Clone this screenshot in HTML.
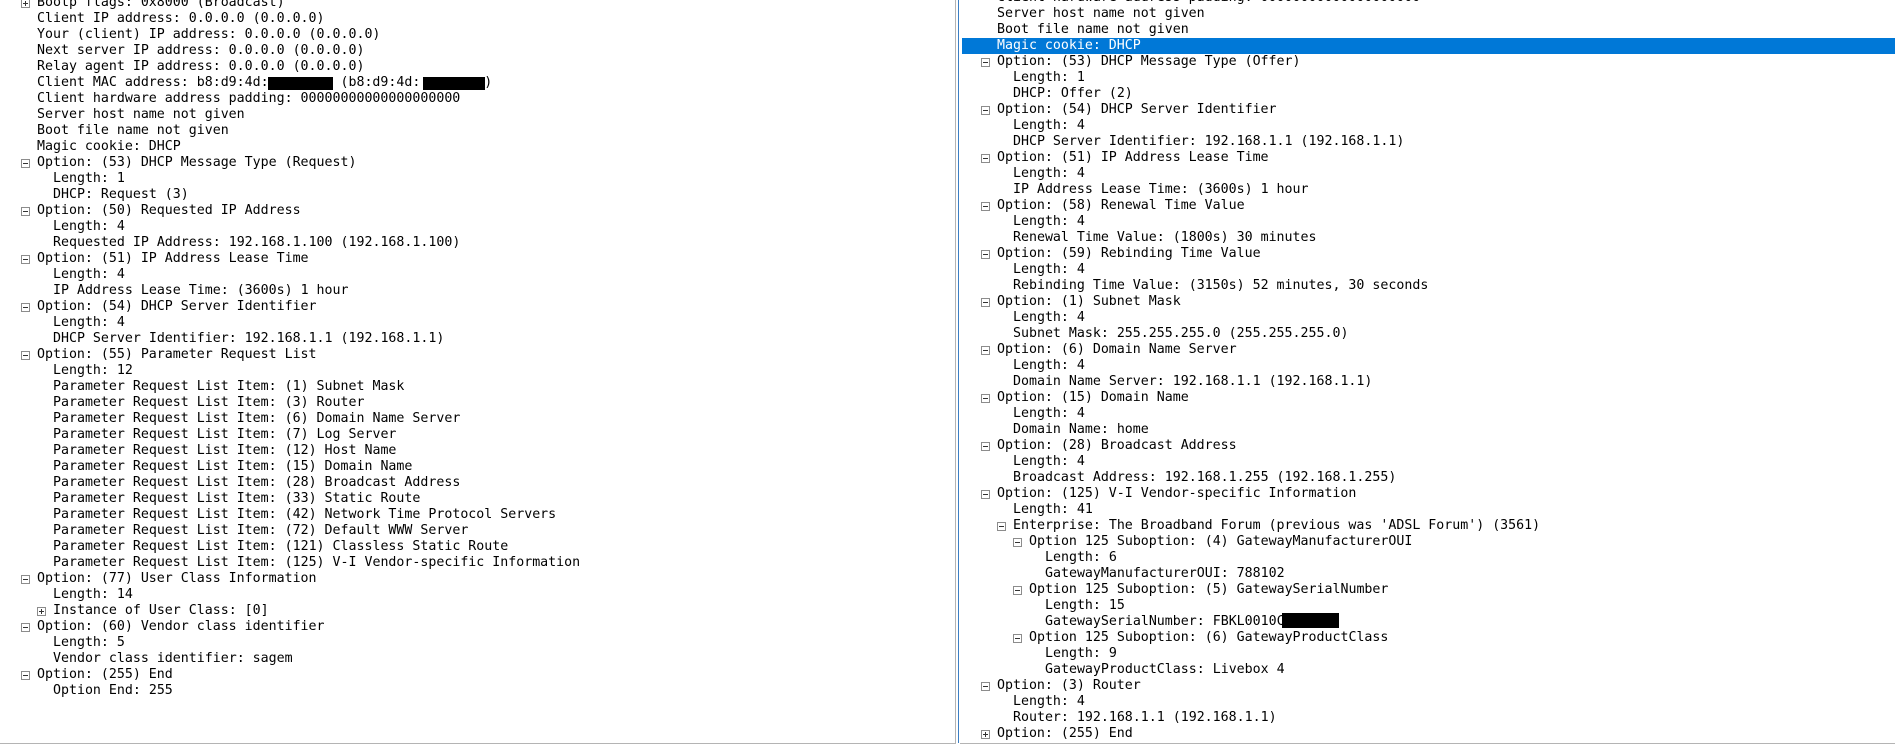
<!DOCTYPE html>
<html><head><meta charset="utf-8"><style>
html,body{margin:0;padding:0;background:#fff;width:1895px;height:745px;overflow:hidden;position:relative}
.p{position:absolute;top:0;overflow:hidden;background:#fff}
.l{position:absolute;height:16px;line-height:16px;white-space:pre;font-family:"DejaVu Sans Mono","Liberation Mono",monospace;font-size:13.28px;color:#000;left:0;right:0}
.t{position:absolute;top:0}
.i{position:absolute;top:4px;width:7px;height:7px;border:1px solid #8c8c8c;background:#fff}
.i:before{content:"";position:absolute;left:1px;top:3px;width:5px;height:1px;background:#333}
.i.pl:after{content:"";position:absolute;left:3px;top:1px;width:1px;height:5px;background:#333}
.b{position:absolute;background:#000}
.sel{background:#0078d7}
.sel .t{color:#fff}
</style></head><body>
<div class="p" id="L" style="left:0;width:955px;height:743px;border-right:1px solid #b4b4b4;border-bottom:1px solid #b4b4b4"></div>
<div style="position:absolute;left:958px;top:0;width:1px;height:743px;background:#3c7fc4"></div>
<div class="p" id="R" style="left:960px;width:935px;height:743px;border-bottom:1px solid #b4b4b4"></div>
<script>
function build(id,top0,lines){
 var p=document.getElementById(id);var h='';
 lines.forEach(function(a,n){
  var lv=a[0],ic=a[1],tx=a[2],sel=a[3];
  var x=37+lv*16;
  var top=top0+n*16;
  h+='<div class="l'+(sel?' sel':'')+'" style="top:'+top+'px;'+(sel?'left:2px;':'')+'">';
  if(ic) h+='<span class="i'+(ic=='+'?' pl':'')+'" style="left:'+(x-16-(sel?2:0))+'px"></span>';
  h+='<span class="t" style="left:'+(x-(sel?2:0))+'px">'+tx.replace(/&/g,'&amp;').replace(/</g,'&lt;')+'</span></div>';
 });
 p.innerHTML=h;
}
var P='Parameter Request List Item: ';
build('L',-5,[
[0,'+','Bootp flags: 0x8000 (Broadcast)'],
[0,0,'Client IP address: 0.0.0.0 (0.0.0.0)'],
[0,0,'Your (client) IP address: 0.0.0.0 (0.0.0.0)'],
[0,0,'Next server IP address: 0.0.0.0 (0.0.0.0)'],
[0,0,'Relay agent IP address: 0.0.0.0 (0.0.0.0)'],
[0,0,'Client MAC address: b8:d9:4d:         (b8:d9:4d:        )'],
[0,0,'Client hardware address padding: 00000000000000000000'],
[0,0,'Server host name not given'],
[0,0,'Boot file name not given'],
[0,0,'Magic cookie: DHCP'],
[0,'-','Option: (53) DHCP Message Type (Request)'],
[1,0,'Length: 1'],
[1,0,'DHCP: Request (3)'],
[0,'-','Option: (50) Requested IP Address'],
[1,0,'Length: 4'],
[1,0,'Requested IP Address: 192.168.1.100 (192.168.1.100)'],
[0,'-','Option: (51) IP Address Lease Time'],
[1,0,'Length: 4'],
[1,0,'IP Address Lease Time: (3600s) 1 hour'],
[0,'-','Option: (54) DHCP Server Identifier'],
[1,0,'Length: 4'],
[1,0,'DHCP Server Identifier: 192.168.1.1 (192.168.1.1)'],
[0,'-','Option: (55) Parameter Request List'],
[1,0,'Length: 12'],
[1,0,P+'(1) Subnet Mask'],
[1,0,P+'(3) Router'],
[1,0,P+'(6) Domain Name Server'],
[1,0,P+'(7) Log Server'],
[1,0,P+'(12) Host Name'],
[1,0,P+'(15) Domain Name'],
[1,0,P+'(28) Broadcast Address'],
[1,0,P+'(33) Static Route'],
[1,0,P+'(42) Network Time Protocol Servers'],
[1,0,P+'(72) Default WWW Server'],
[1,0,P+'(121) Classless Static Route'],
[1,0,P+'(125) V-I Vendor-specific Information'],
[0,'-','Option: (77) User Class Information'],
[1,0,'Length: 14'],
[1,'+','Instance of User Class: [0]'],
[0,'-','Option: (60) Vendor class identifier'],
[1,0,'Length: 5'],
[1,0,'Vendor class identifier: sagem'],
[0,'-','Option: (255) End'],
[1,0,'Option End: 255']
]);
build('R',-10,[
[0,0,'Client hardware address padding: 00000000000000000000'],
[0,0,'Server host name not given'],
[0,0,'Boot file name not given'],
[0,0,'Magic cookie: DHCP',1],
[0,'-','Option: (53) DHCP Message Type (Offer)'],
[1,0,'Length: 1'],
[1,0,'DHCP: Offer (2)'],
[0,'-','Option: (54) DHCP Server Identifier'],
[1,0,'Length: 4'],
[1,0,'DHCP Server Identifier: 192.168.1.1 (192.168.1.1)'],
[0,'-','Option: (51) IP Address Lease Time'],
[1,0,'Length: 4'],
[1,0,'IP Address Lease Time: (3600s) 1 hour'],
[0,'-','Option: (58) Renewal Time Value'],
[1,0,'Length: 4'],
[1,0,'Renewal Time Value: (1800s) 30 minutes'],
[0,'-','Option: (59) Rebinding Time Value'],
[1,0,'Length: 4'],
[1,0,'Rebinding Time Value: (3150s) 52 minutes, 30 seconds'],
[0,'-','Option: (1) Subnet Mask'],
[1,0,'Length: 4'],
[1,0,'Subnet Mask: 255.255.255.0 (255.255.255.0)'],
[0,'-','Option: (6) Domain Name Server'],
[1,0,'Length: 4'],
[1,0,'Domain Name Server: 192.168.1.1 (192.168.1.1)'],
[0,'-','Option: (15) Domain Name'],
[1,0,'Length: 4'],
[1,0,'Domain Name: home'],
[0,'-','Option: (28) Broadcast Address'],
[1,0,'Length: 4'],
[1,0,'Broadcast Address: 192.168.1.255 (192.168.1.255)'],
[0,'-','Option: (125) V-I Vendor-specific Information'],
[1,0,'Length: 41'],
[1,'-',"Enterprise: The Broadband Forum (previous was 'ADSL Forum') (3561)"],
[2,'-','Option 125 Suboption: (4) GatewayManufacturerOUI'],
[3,0,'Length: 6'],
[3,0,'GatewayManufacturerOUI: 788102'],
[2,'-','Option 125 Suboption: (5) GatewaySerialNumber'],
[3,0,'Length: 15'],
[3,0,'GatewaySerialNumber: FBKL0010C'],
[2,'-','Option 125 Suboption: (6) GatewayProductClass'],
[3,0,'Length: 9'],
[3,0,'GatewayProductClass: Livebox 4'],
[0,'-','Option: (3) Router'],
[1,0,'Length: 4'],
[1,0,'Router: 192.168.1.1 (192.168.1.1)'],
[0,'+','Option: (255) End']
]);
</script>
<div class="b" style="left:268px;top:77px;width:65px;height:13px"></div>
<div class="b" style="left:423px;top:77px;width:62px;height:13px"></div>
<div class="b" style="left:1282px;top:613px;width:57px;height:15px"></div>
</body></html>
